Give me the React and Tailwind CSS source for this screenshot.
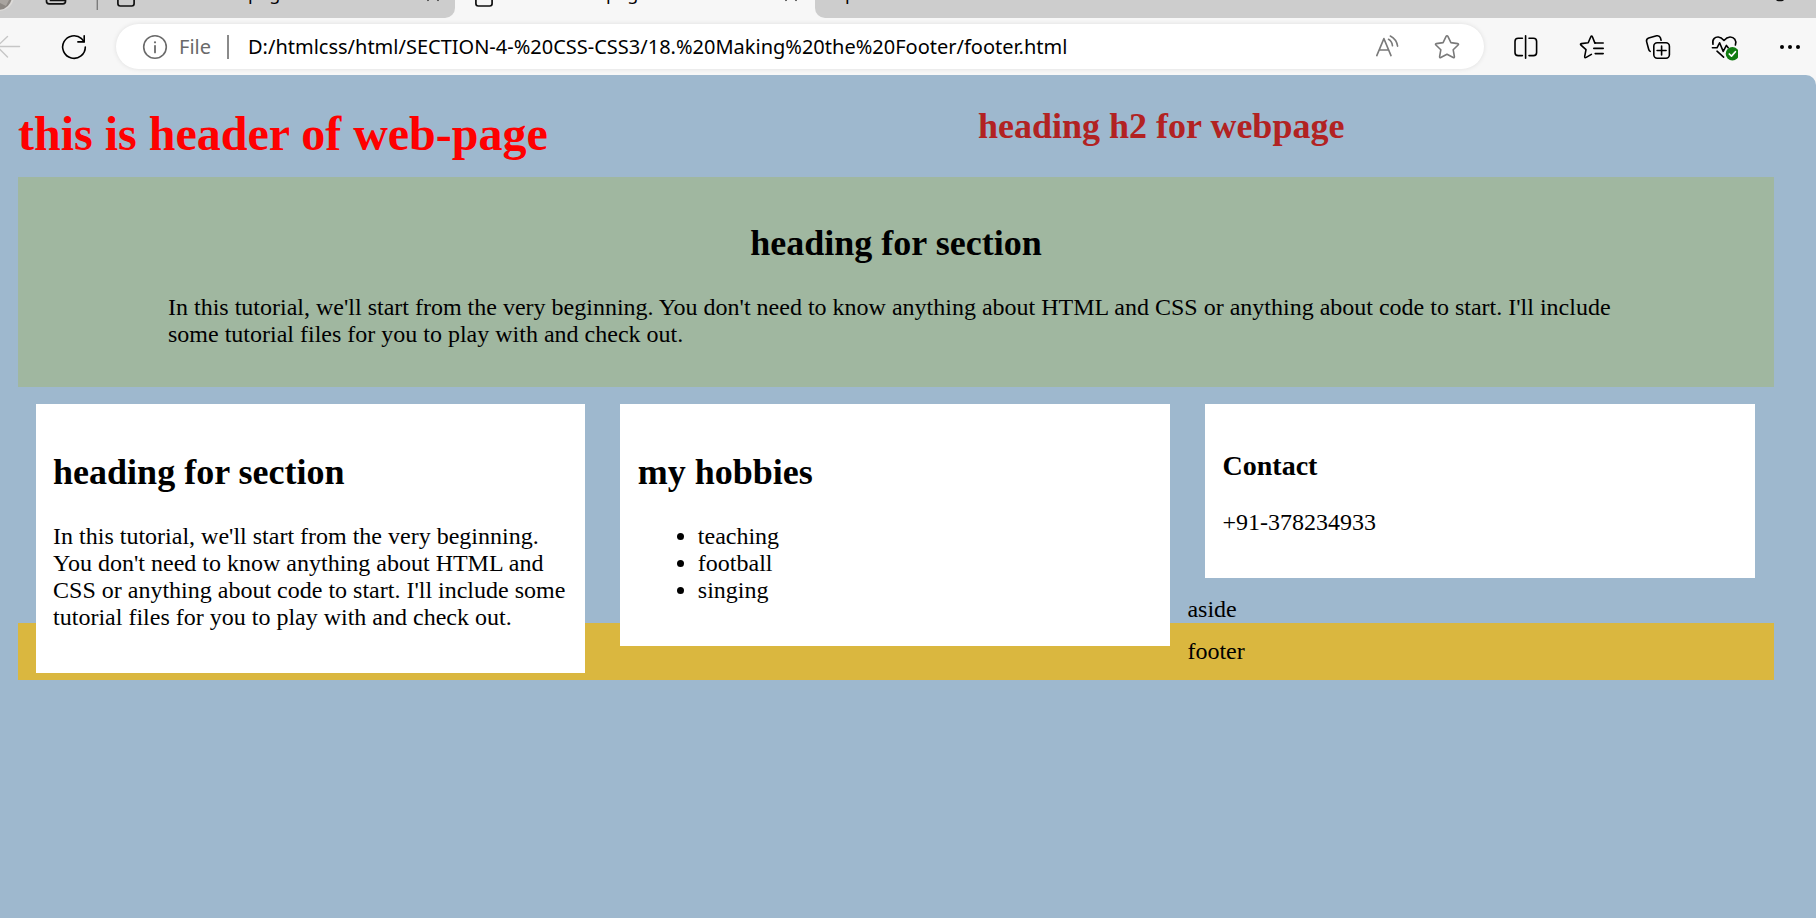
const LOREM =
  "In this tutorial, we'll start from the very beginning. You don't need to know anything about HTML and CSS or anything about code to start. I'll include some tutorial files for you to play with and check out.";

const HOBBIES = ["teaching", "football", "singing"];

function Icon({ children, className = "text-black" }) {
  return (
    <svg
      viewBox="0 0 28 28"
      className={`block h-7 w-7 shrink-0 ${className}`}
      fill="none"
      stroke="currentColor"
      strokeWidth="1.6"
      strokeLinecap="round"
      strokeLinejoin="round"
      aria-hidden="true"
    >
      {children}
    </svg>
  );
}

function ToolButton({ label, children }) {
  return (
    <button type="button" aria-label={label} className="block shrink-0">
      {children}
    </button>
  );
}

function PageIcon() {
  return (
    <svg viewBox="0 0 20 18" className="h-[18px] w-5 shrink-0" fill="none" stroke="#111" strokeWidth="1.7" aria-hidden="true">
      <path d="M1.9 -2V3.6Q1.9 6 4.3 6H15.7Q18.1 6 18.1 3.6V-2" />
    </svg>
  );
}

function CloseIcon() {
  return (
    <svg viewBox="0 0 16 18" className="h-[18px] w-4 shrink-0" stroke="#222" strokeWidth="1.3" aria-hidden="true">
      <path d="M8 -5L2.5 0.8M8 -5L13.5 0.8" />
    </svg>
  );
}

function TabTitle({ children }) {
  return <span className="pb-[13px] text-[18px] leading-6 text-black">{children}</span>;
}

function TabStrip() {
  return (
    <div className="flex h-[18px] items-end overflow-hidden bg-[#f7f7f7] font-['Noto_Sans',sans-serif]">
      <div className="flex h-full w-[455px] shrink-0 items-end rounded-br-[10px] bg-[#cdcdcd]">
        <svg viewBox="0 0 100 18" className="h-[18px] w-[100px] shrink-0" fill="none" aria-hidden="true">
          <circle cx="-1" cy="-4" r="15" fill="#dcdad8" />
          <circle cx="-2" cy="-4" r="14" fill="#8d8883" />
          <path d="M0 0H9L6 6L0 3Z" fill="#a9a49f" />
          <path d="M46.5 -2V1.2Q46.5 3.8 49.1 3.8H62.9Q65.5 3.8 65.5 1.2V-2M50.5 -2V0.4H65" stroke="#111" strokeWidth="1.7" />
          <path d="M97.3 0V10" stroke="#7c7c7c" strokeWidth="1.4" />
        </svg>
        <div className="flex h-full w-full items-end pl-4 pr-[14px]">
          <PageIcon />
          <div className="flex flex-1 pl-28">
            <TabTitle>page</TabTitle>
          </div>
          <CloseIcon />
        </div>
      </div>
      <div className="flex h-full w-[360px] shrink-0 items-end pl-[19px] pr-4">
        <PageIcon />
        <div className="flex flex-1 pl-28">
          <TabTitle>page</TabTitle>
        </div>
        <CloseIcon />
      </div>
      <div className="flex h-full flex-1 items-end justify-between rounded-bl-[10px] bg-[#cdcdcd] pl-[30px] pr-[30px]">
        <TabTitle>p</TabTitle>
        <svg viewBox="0 0 12 18" className="h-[18px] w-3 shrink-0" aria-hidden="true">
          <path d="M2 0H10Q9 1.2 7.5 1.2H4.5Q3 1.2 2 0Z" fill="#111" />
        </svg>
      </div>
    </div>
  );
}

function Toolbar() {
  return (
    <div className="flex h-[57px] items-center bg-[#f7f7f7] pr-3 font-['Noto_Sans',sans-serif]">
      <ToolButton label="Back">
        <Icon className="text-[#c6c6c6]">
          <path d="M19.5 13.5H-2M7.5 3.5L-3 13.5L7.5 24" strokeWidth="1.4" />
        </Icon>
      </ToolButton>
      <div className="ml-8">
        <ToolButton label="Refresh">
          <Icon>
            <path d="M25.3 14A11.3 11.3 0 1 1 21.6 5.7L24.2 8.6" />
            <path d="M24.2 2.7V8.9H17.9" />
          </Icon>
        </ToolButton>
      </div>
      <div className="ml-7 flex h-[45px] min-w-0 flex-1 items-center rounded-full bg-white pl-[25px] pr-[23px] shadow-[0_0_5px_rgba(0,0,0,0.10)]">
        <Icon className="text-[#6a6a6a]">
          <circle cx="14" cy="14" r="11.3" />
          <path d="M14 12.8V19.4" strokeWidth="1.8" />
          <circle cx="14" cy="9.3" r="1.1" fill="currentColor" stroke="none" />
        </Icon>
        <label htmlFor="address" className="ml-[10px] text-[20px] leading-6 text-[#6a6a6a]">
          File
        </label>
        <span className="ml-4 h-6 w-0.5 shrink-0 bg-[#8a8a8a]" />
        <input
          id="address"
          type="text"
          readOnly
          value="D:/htmlcss/html/SECTION-4-%20CSS-CSS3/18.%20Making%20the%20Footer/footer.html"
          className="ml-[19px] min-w-0 flex-1 bg-transparent text-[20px] leading-6 text-black outline-none"
        />
        <div className="flex gap-8">
          <ToolButton label="Read aloud">
            <Icon className="text-[#7a7a7a]">
              <path d="M3.8 22.6L10.9 5.6L18 22.6M6.3 17H15.5" />
              <path d="M15.5 6.3Q19 8.3 19.5 12.8M17.3 3Q23.6 6.2 24.6 13.2" />
            </Icon>
          </ToolButton>
          <ToolButton label="Add to favorites">
            <Icon className="text-[#7a7a7a]">
              <path d="M14 2.8Q14.6 2.8 14.9 3.4L17.9 9.6L24.7 10.6Q26.1 10.9 25.1 12L20.2 16.8L21.4 23.6Q21.5 25 20.2 24.5L14 21.2L7.8 24.5Q6.5 25 6.6 23.6L7.8 16.8L2.9 12Q1.9 10.9 3.3 10.6L10.1 9.6L13.1 3.4Q13.4 2.8 14 2.8Z" />
            </Icon>
          </ToolButton>
        </div>
      </div>
      <div className="ml-7 flex gap-[38px]">
        <ToolButton label="Split screen">
          <Icon>
            <path d="M10.4 5.2H6.2Q3 5.2 3 8.4V19.4Q3 22.6 6.2 22.6H10.4M17 5.2H21.4Q24.6 5.2 24.6 8.4V19.4Q24.6 22.6 21.4 22.6H17M13.6 2.8V25.2" />
          </Icon>
        </ToolButton>
        <ToolButton label="Favorites">
          <Icon>
            <path d="M17.4 9.9H16.8L14.5 4Q13.6 2.3 12.7 4L10.2 9.7L3.4 10.6Q1.8 11 3 12.2L8 16.7L6.7 23.4Q6.5 25.3 8.2 24.4L13.4 21.4" />
            <path d="M17 10H25.2M15.8 15.4H25.2M17.2 20.6H25.2" />
          </Icon>
        </ToolButton>
        <ToolButton label="Collections">
          <Icon>
            <path d="M6.2 18.4Q5 17.8 4.6 16L2.6 8.6Q2 5.8 4.7 5L12.6 2.8Q15.5 2.2 16.4 4.8L17.1 7.2" />
            <rect x="9.8" y="9.8" width="15.6" height="15.4" rx="3.4" />
            <path d="M17.6 13V22M13.1 17.5H22.1" />
          </Icon>
        </ToolButton>
        <ToolButton label="Browser essentials">
          <Icon>
            <path d="M3 11.2C1.8 6.2 5.2 3.8 8.3 4C11 4.2 12.3 5.4 14 7.4C15.7 5.4 17.3 4.2 20 4C24 3.9 27 7.6 25.4 12" />
            <path d="M2.4 14.8H7L9.6 9.8L13.2 18.4L16.4 12.4L18.2 14.8" />
            <path d="M7 18.2L13.6 24.2" />
            <circle cx="22.4" cy="20.8" r="6.7" fill="#107c10" stroke="none" />
            <path d="M19.3 21L21.5 23.1L25.4 18.7" stroke="#fff" strokeWidth="1.7" />
          </Icon>
        </ToolButton>
        <ToolButton label="Settings and more">
          <Icon>
            <g fill="currentColor" stroke="none">
              <circle cx="6" cy="14" r="2" />
              <circle cx="14" cy="14" r="2" />
              <circle cx="22" cy="14" r="2" />
            </g>
          </Icon>
        </ToolButton>
      </div>
    </div>
  );
}

function Card({ children }) {
  return (
    <section className="float-left mx-[1%] mb-[18px] mt-[17px] w-[31.3%] bg-white px-[1%] pb-[42px] pt-[18px]">
      {children}
    </section>
  );
}

function CardHeading({ children }) {
  return <h2 className="my-[30px] text-[36px] font-bold leading-[41px]">{children}</h2>;
}

function WebPage() {
  return (
    <div className="flow-root flex-1 rounded-tr-[10px] bg-[#9eb8ce] pl-[18px] pr-[42px] pt-[31px] font-['Liberation_Serif',serif] text-[24px] leading-[27px] text-black">
      <header className="mb-4 flex items-start">
        <h1 className="w-1/2 text-[48px] font-bold leading-[55px] text-[#ff0000]">this is header of web-page</h1>
        <h2 className="w-1/2 pl-[82px] text-[36px] font-bold leading-[41px] text-[#b22222]">heading h2 for webpage</h2>
      </header>
      <section className="bg-[#a0b7a0] px-[150px] pb-[39px] pt-[46px]">
        <h2 className="mb-[30px] text-center text-[36px] font-bold leading-[41px]">heading for section</h2>
        <p>{LOREM}</p>
      </section>
      <main>
        <Card>
          <CardHeading>heading for section</CardHeading>
          <p>{LOREM}</p>
        </Card>
        <Card>
          <CardHeading>my hobbies</CardHeading>
          <ul className="list-disc pl-[60px]">
            {HOBBIES.map((hobby) => (
              <li key={hobby}>{hobby}</li>
            ))}
          </ul>
        </Card>
        <Card>
          <h3 className="my-7 text-[28px] font-bold leading-[31px]">Contact</h3>
          <p>+91-378234933</p>
        </Card>
        <aside>aside</aside>
      </main>
      <footer className="bg-[#dab73f] py-[15px]">footer</footer>
    </div>
  );
}

export default function App() {
  return (
    <div className="flex min-h-screen flex-col bg-[#f7f7f7]">
      <TabStrip />
      <Toolbar />
      <WebPage />
    </div>
  );
}
